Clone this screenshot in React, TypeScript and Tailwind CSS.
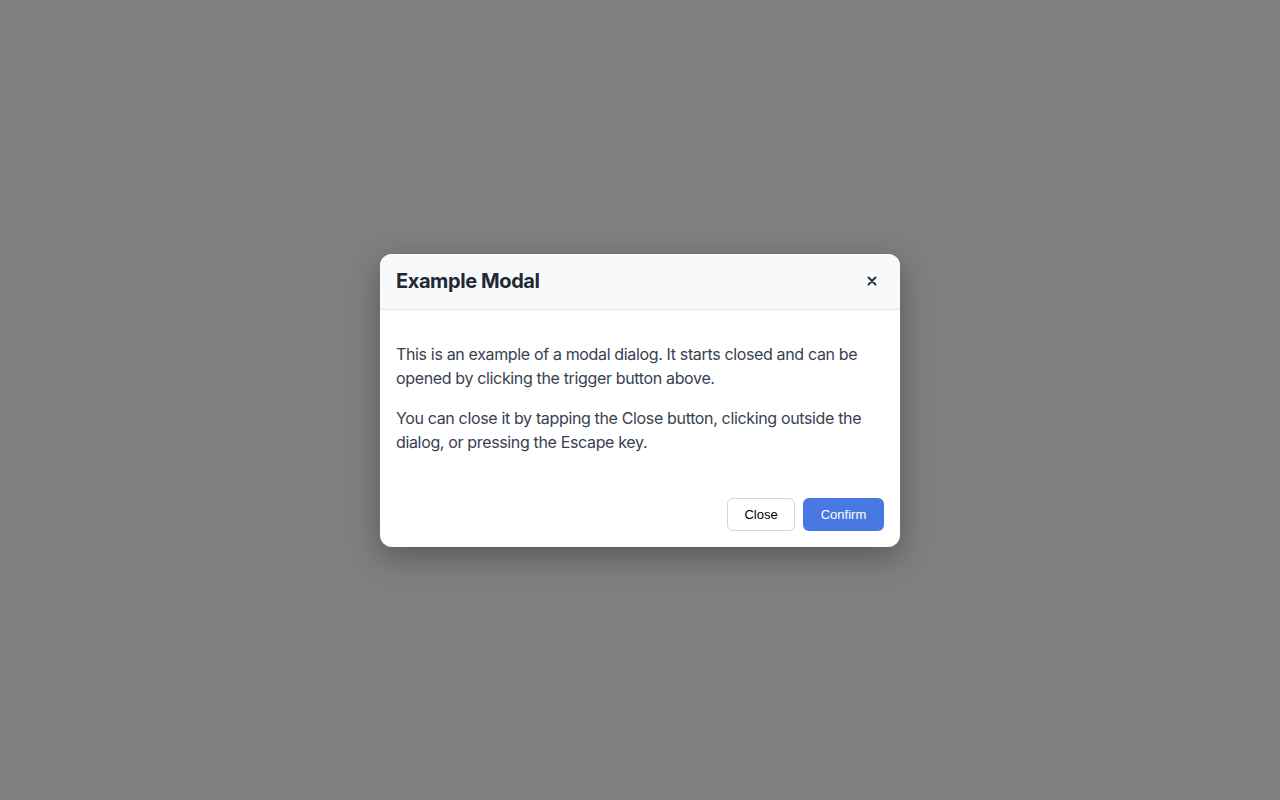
export default function App() {
  return (
    <div className="w-full h-screen bg-[#7e7f81] flex items-center justify-center font-['Inter',sans-serif]">
      <div className="w-[520px] bg-white rounded-xl shadow-[0_10px_30px_rgba(0,0,0,0.3)] overflow-hidden">
        {/* Header */}
        <div className="h-[56px] flex items-center justify-between px-4 bg-[#f8f9fb] border-b border-[#e5e7eb]">
          <h2 className="text-[20px] leading-7 font-bold text-[#1f2937] tracking-[-0.4px]">Example Modal</h2>
          <button className="w-6 h-6 flex items-center justify-center text-[#2b3442]" aria-label="Close">
            <svg width="10" height="10" viewBox="0 0 10 10" fill="none" stroke="currentColor" strokeWidth="2" strokeLinecap="round">
              <path d="M1.5 1.5l7 7M8.5 1.5l-7 7" />
            </svg>
          </button>
        </div>

        {/* Body */}
        <div className="px-4 pt-8 pb-11 text-[16px] leading-6 text-[#374151] tracking-[-0.35px] space-y-4">
          <p>This is an example of a modal dialog. It starts closed and can be opened by clicking the trigger button above.</p>
          <p>You can close it by tapping the Close button, clicking outside the dialog, or pressing the Escape key.</p>
        </div>

        {/* Footer */}
        <div className="flex justify-end gap-2 px-4 pb-4 font-['Liberation_Sans',Arial,sans-serif] text-[13px]">
          <button className="h-[33px] w-[68px] flex items-center justify-center pt-px rounded-md border border-[#d1d5db] bg-white text-black">Close</button>
          <button className="h-[33px] w-[81px] flex items-center justify-center pt-px rounded-md bg-[#4a78e3] text-white">Confirm</button>
        </div>
      </div>
    </div>
  );
}
